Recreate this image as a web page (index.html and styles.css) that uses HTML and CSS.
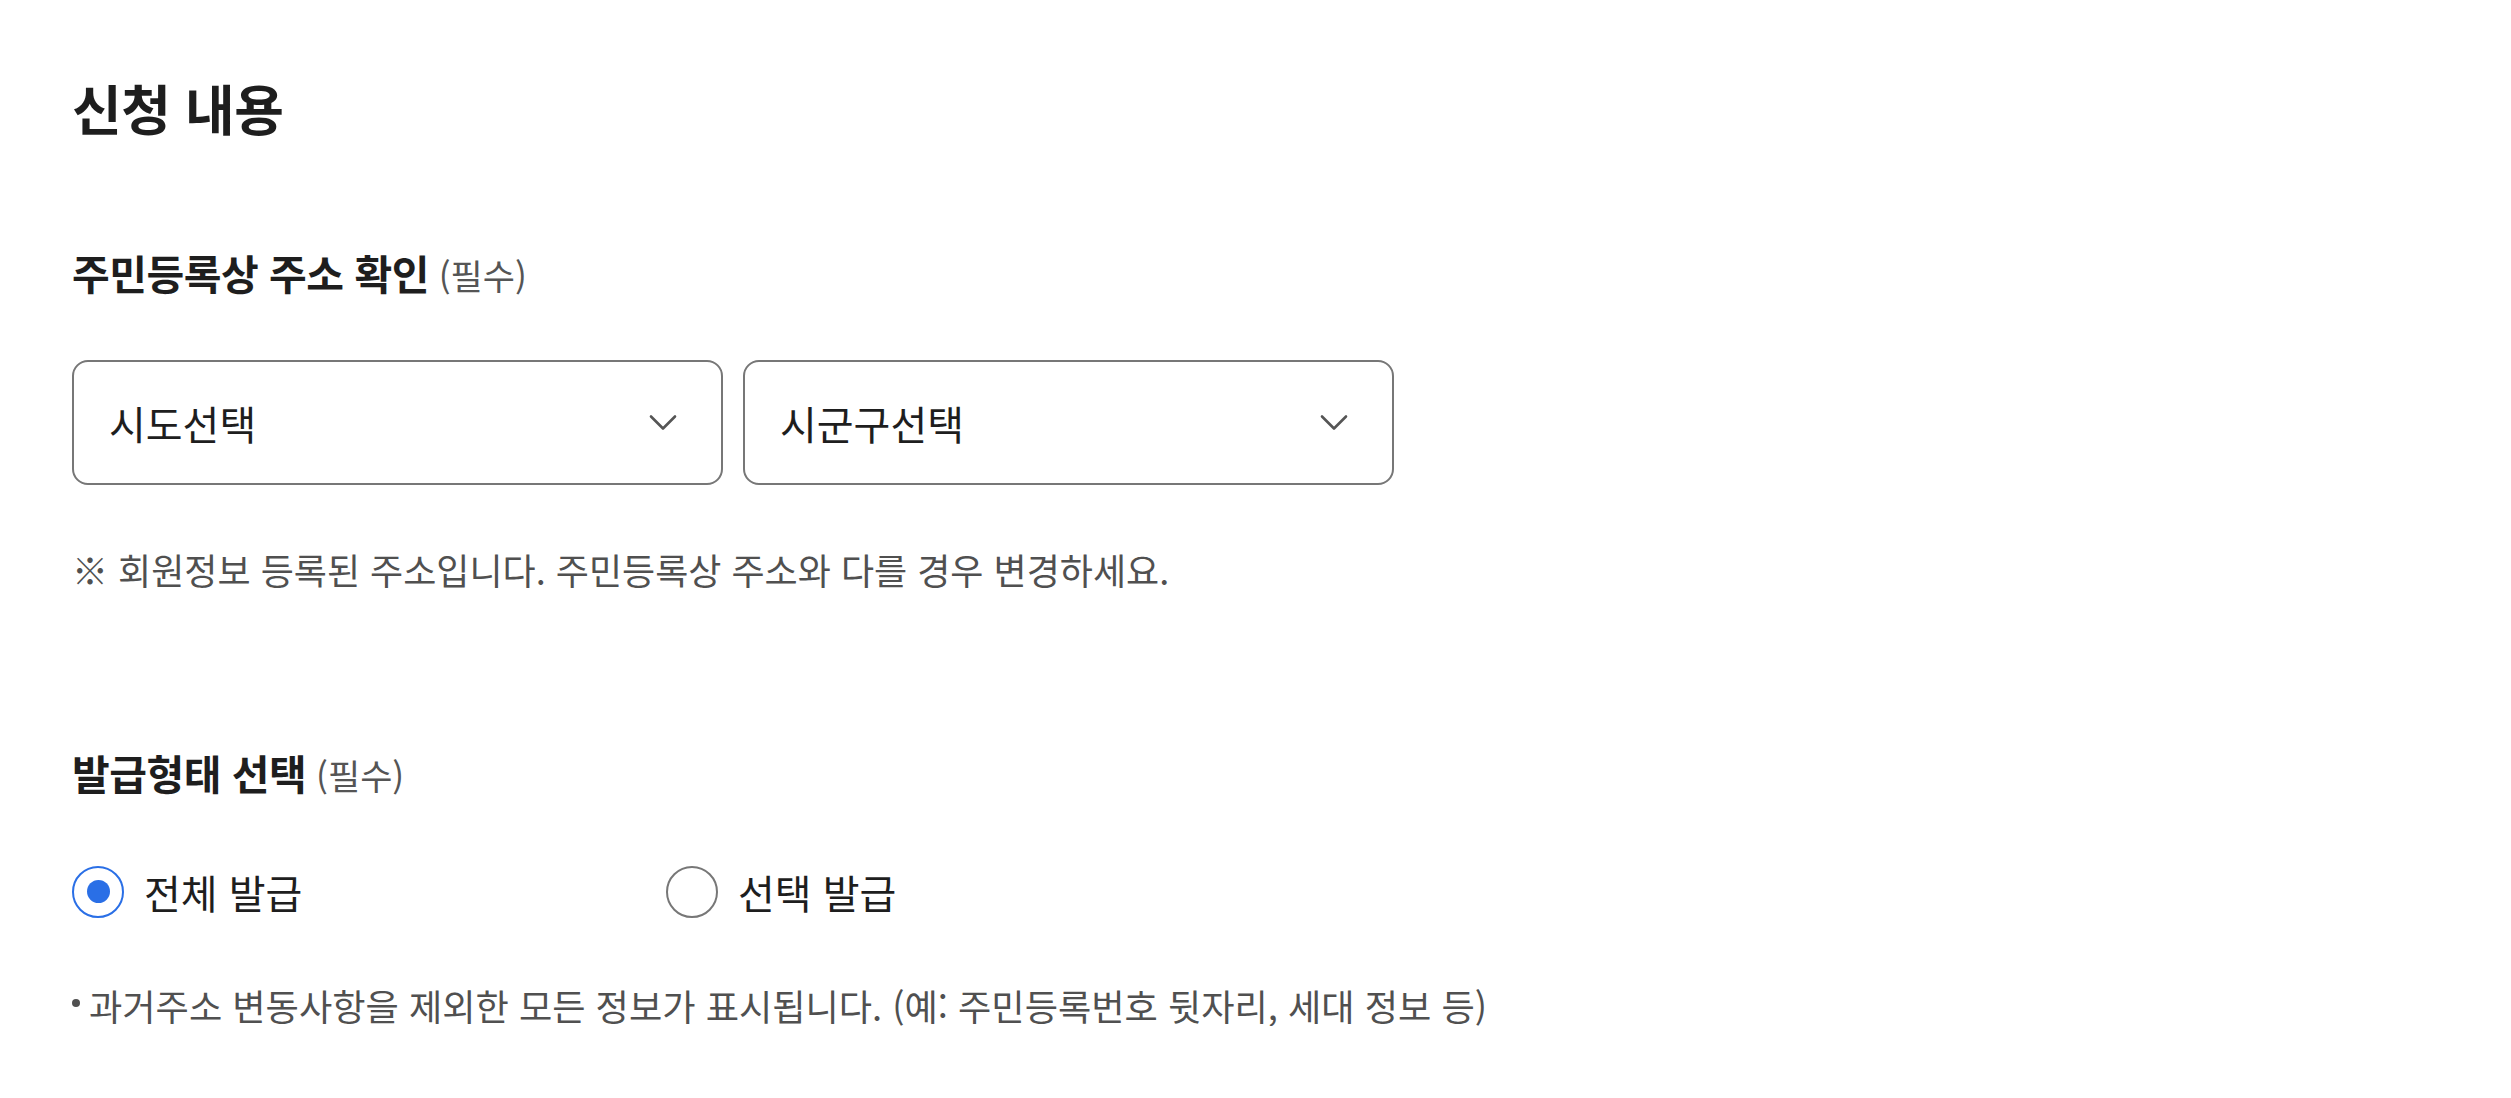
FILE: index.html
```html
<!DOCTYPE html>
<html lang="ko">
<head>
<meta charset="utf-8">
<title>신청 내용</title>
<link rel="stylesheet" href="styles.css">
</head>
<body>
<main class="page">
  <h1 class="title">신청 내용</h1>

  <section class="section">
    <h2 class="label">주민등록상 주소 확인<span class="req"> (필수)</span></h2>
    <div class="select-row">
      <div class="select">
        <span class="select-text">시도선택</span>
        <svg class="chev" width="28" height="18" viewBox="0 0 28 18"><polyline points="2,2.5 14,14.5 26,2.5" fill="none" stroke="#555" stroke-width="2.6" stroke-linecap="round" stroke-linejoin="round"/></svg>
      </div>
      <div class="select">
        <span class="select-text">시군구선택</span>
        <svg class="chev" width="28" height="18" viewBox="0 0 28 18"><polyline points="2,2.5 14,14.5 26,2.5" fill="none" stroke="#555" stroke-width="2.6" stroke-linecap="round" stroke-linejoin="round"/></svg>
      </div>
    </div>
    <p class="note">※ 회원정보 등록된 주소입니다. 주민등록상 주소와 다를 경우 변경하세요.</p>
  </section>

  <section class="section section-2">
    <h2 class="label">발급형태 선택<span class="req"> (필수)</span></h2>
    <div class="radio-row">
      <div class="radio-item">
        <span class="radio checked"></span>
        <span class="radio-label">전체 발급</span>
      </div>
      <div class="radio-item">
        <span class="radio"></span>
        <span class="radio-label">선택 발급</span>
      </div>
    </div>
    <p class="bullet">과거주소 변동사항을 제외한 모든 정보가 표시됩니다. (예: 주민등록번호 뒷자리, 세대 정보 등)</p>
  </section>
</main>
</body>
</html>
```

FILE: styles.css
```css
html, body {
  margin: 0;
  padding: 0;
  background: #ffffff;
}

body {
  font-family: "Noto Sans CJK KR", "Noto Sans", sans-serif;
  color: #1e1e1e;
}

.page {
  padding: 76px 0 0 72px;
}

.title {
  margin: 0;
  font-size: 54px;
  font-weight: 700;
  line-height: 64px;
  letter-spacing: -0.5px;
}

.section {
  margin-top: 108px;
}

.section-2 {
  margin-top: 158px;
}

.label {
  margin: 0;
  font-size: 41px;
  font-weight: 700;
  line-height: 48px;
  letter-spacing: -0.5px;
}

.req {
  font-size: 35px;
  font-weight: 400;
  color: #555555;
  letter-spacing: 0;
}

.select-row {
  display: flex;
  gap: 20px;
  margin-top: 61px;
}

.select {
  box-sizing: border-box;
  width: 651px;
  height: 125px;
  border: 2px solid #777777;
  border-radius: 16px;
  display: flex;
  align-items: center;
  justify-content: space-between;
  padding: 0 44px 0 35px;
}

.select-text {
  font-size: 40px;
  line-height: 48px;
  color: #1e1e1e;
}

.chev {
  display: block;
}

.note {
  margin: 63px 0 0;
  font-size: 36px;
  line-height: 42px;
  color: #505050;
}

.radio-row {
  display: grid;
  grid-template-columns: 594px auto;
  margin-top: 66px;
}

.radio-item {
  display: flex;
  align-items: center;
  gap: 20px;
  height: 53px;
}

.radio {
  box-sizing: border-box;
  width: 52px;
  height: 52px;
  border: 2px solid #777777;
  border-radius: 50%;
  display: flex;
  align-items: center;
  justify-content: center;
  flex: none;
}

.radio.checked {
  border-color: #2a6fe6;
}

.radio.checked::after {
  content: "";
  width: 23px;
  height: 23px;
  border-radius: 50%;
  background: #2a6fe6;
}

.radio-label {
  font-size: 40px;
  line-height: 48px;
  color: #1e1e1e;
}

.bullet {
  margin: 66px 0 0;
  font-size: 36.2px;
  line-height: 42px;
  color: #505050;
  display: flex;
  align-items: center;
}

.bullet::before {
  content: "";
  width: 8px;
  height: 8px;
  border-radius: 50%;
  background: #505050;
  margin: 0 9px 4px 0;
  flex: none;
}
```
